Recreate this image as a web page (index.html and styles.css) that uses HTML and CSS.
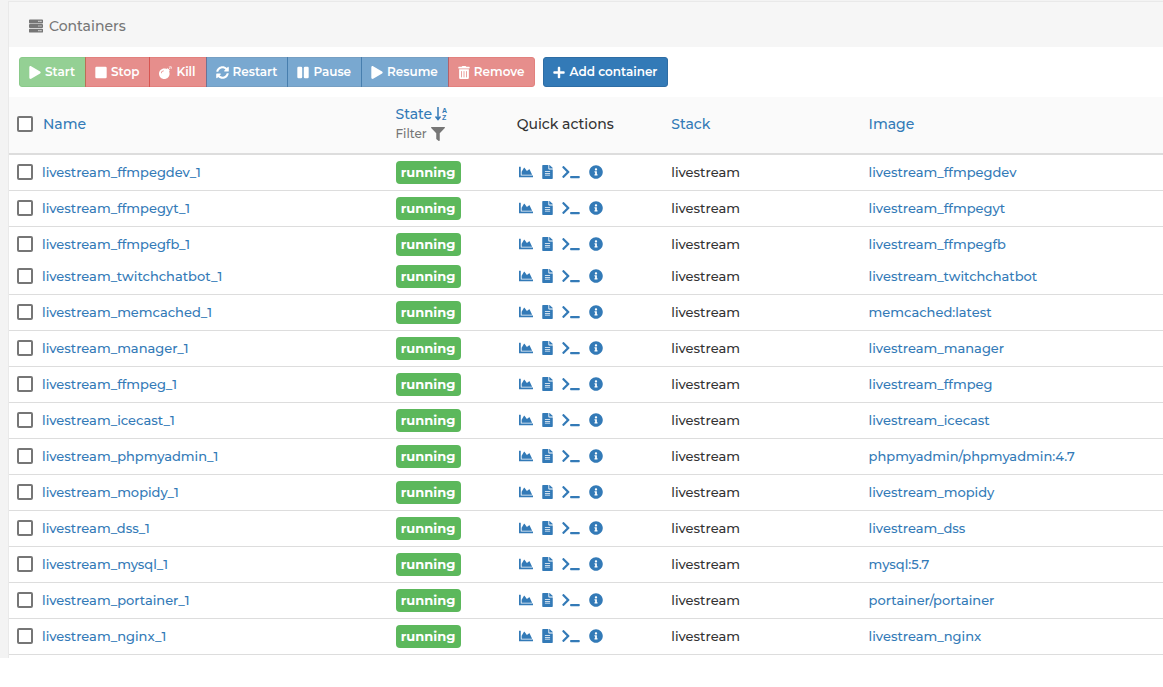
FILE: index.html
```html
<!DOCTYPE html>
<html lang="en">
<head>
<meta charset="utf-8">
<title>Containers</title>
<link rel="stylesheet" href="styles.css">
</head>
<body>
<svg class="sprite" aria-hidden="true">
  <symbol id="server" viewBox="0 0 512 512"><path fill-rule="evenodd" d="M32 16H480Q512 16 512 48V128Q512 160 480 160H32Q0 160 0 128V48Q0 16 32 16ZM344 66V110H384V66ZM416 66V110H456V66ZM32 184H480Q512 184 512 216V296Q512 328 480 328H32Q0 328 0 296V216Q0 184 32 184ZM344 234V278H384V234ZM416 234V278H456V234ZM32 352H480Q512 352 512 384V464Q512 496 480 496H32Q0 496 0 464V384Q0 352 32 352ZM344 402V446H384V402ZM416 402V446H456V402Z"/></symbol>
  <symbol id="play" viewBox="0 0 448 512"><path d="M424.400 214.700L72.400 6.600C43.800-10.300 0 6.100 0 47.900V464c0 37.500 40.700 60.100 72.400 41.300l352-208c31.400-18.500 31.500-64.100 0-82.600z"/></symbol>
  <symbol id="stop" viewBox="0 0 448 512"><rect y="32" width="448" height="448" rx="48"/></symbol>
  <symbol id="bomb" viewBox="0 0 512 512"><path d="M440.500 88.500l-52 52L415 167c9.400 9.400 9.400 24.600 0 33.900l-17.400 17.400c11.800 26.100 18.400 55.100 18.400 85.600 0 114.900-93.100 208-208 208S0 418.900 0 304 93.100 96 208 96c30.500 0 59.500 6.600 85.600 18.400L311 97c9.400-9.400 24.600-9.400 33.900 0l26.500 26.500 52-52 17.100 17zM500 60h-24c-6.600 0-12 5.400-12 12s5.400 12 12 12h24c6.600 0 12-5.400 12-12s-5.400-12-12-12zM440 0c-6.600 0-12 5.400-12 12v24c0 6.600 5.400 12 12 12s12-5.400 12-12V12c0-6.600-5.400-12-12-12zm33.900 55l17-17c4.700-4.700 4.700-12.300 0-17-4.700-4.700-12.300-4.700-17 0l-17 17c-4.700 4.700-4.700 12.300 0 17 4.800 4.700 12.400 4.700 17 0zm-67.800 0c4.700 4.700 12.300 4.700 17 0 4.700-4.700 4.700-12.300 0-17l-17-17c-4.700-4.700-12.300-4.700-17 0-4.700 4.700-4.700 12.300 0 17l17 17zm67.800 34c-4.700-4.700-12.300-4.700-17 0-4.700 4.700-4.700 12.300 0 17l17 17c4.700 4.700 12.300 4.700 17 0 4.700-4.700 4.700-12.300 0-17l-17-17zM112 272c0-35.300 28.700-64 64-64 8.800 0 16-7.200 16-16s-7.200-16-16-16c-52.900 0-96 43.100-96 96 0 8.800 7.200 16 16 16s16-7.200 16-16z"/></symbol>
  <symbol id="sync" viewBox="0 0 512 512"><path d="M370.720 133.280C339.458 104.008 298.888 87.962 255.848 88c-77.458.068-144.328 53.178-162.791 126.850-1.344 5.363-6.122 9.150-11.651 9.150H24.103c-7.498 0-13.194-6.807-11.807-14.176C33.933 94.924 134.813 8 256 8c66.448 0 126.791 26.136 171.315 68.685L463.030 40.970C478.149 25.851 504 36.559 504 57.941V192c0 13.255-10.745 24-24 24H345.941c-21.382 0-32.090-25.851-16.971-40.971l41.750-41.749zM32 296h134.059c21.382 0 32.090 25.851 16.971 40.971l-41.750 41.750c31.262 29.273 71.835 45.319 114.876 45.280 77.418-.070 144.315-53.144 162.787-126.849 1.344-5.363 6.122-9.150 11.651-9.150h57.304c7.498 0 13.194 6.807 11.807 14.176C478.067 417.076 377.187 504 256 504c-66.448 0-126.791-26.136-171.315-68.685L48.970 471.030C33.851 486.149 8 475.441 8 454.059V320c0-13.255 10.745-24 24-24z"/></symbol>
  <symbol id="pause" viewBox="0 0 448 512"><rect y="31" width="192" height="448" rx="48"/><rect x="256" y="31" width="192" height="448" rx="48"/></symbol>
  <symbol id="trash" viewBox="0 0 448 512"><path d="M32 464a48 48 0 0 0 48 48h288a48 48 0 0 0 48-48V128H32zm272-256a16 16 0 0 1 32 0v224a16 16 0 0 1-32 0zm-96 0a16 16 0 0 1 32 0v224a16 16 0 0 1-32 0zm-96 0a16 16 0 0 1 32 0v224a16 16 0 0 1-32 0zM432 32H312l-9.400-18.700A24 24 0 0 0 281.100 0H166.800a23.720 23.720 0 0 0-21.400 13.300L136 32H16A16 16 0 0 0 0 48v32a16 16 0 0 0 16 16h416a16 16 0 0 0 16-16V48a16 16 0 0 0-16-16z"/></symbol>
  <symbol id="plus" viewBox="0 0 448 512"><path d="M416 208H272V64c0-17.670-14.330-32-32-32h-32c-17.670 0-32 14.330-32 32v144H32c-17.670 0-32 14.330-32 32v32c0 17.670 14.330 32 32 32h144v144c0 17.670 14.330 32 32 32h32c17.670 0 32-14.330 32-32V304h144c17.670 0 32-14.330 32-32v-32c0-17.670-14.330-32-32-32z"/></symbol>
  <symbol id="filter" viewBox="0 0 512 512"><path d="M487.976 0H24.028C2.710 0-8.047 25.866 7.058 40.971L192 225.941V432c0 7.831 3.821 15.170 10.237 19.662l80 55.980C298.020 518.690 320 507.493 320 487.980V225.941l184.947-184.970C520.021 25.896 509.338 0 487.976 0z"/></symbol>
  <symbol id="chart" viewBox="0 0 512 512"><path d="M500 384c6.600 0 12 5.400 12 12v40c0 6.600-5.400 12-12 12H12c-6.600 0-12-5.400-12-12V76c0-6.600 5.400-12 12-12h40c6.600 0 12 5.400 12 12v308h436zM372.700 159.500L288 216l-85.300-113.700c-5.100-6.800-15.500-6.300-19.900 1L96 248v104h384l-89.900-187.800c-3.200-6.500-11.400-8.700-17.400-4.700z"/></symbol>
  <symbol id="file" viewBox="0 0 384 512"><path d="M224 136V0H24C10.700 0 0 10.700 0 24v464c0 13.300 10.700 24 24 24h336c13.300 0 24-10.700 24-24V160H248c-13.200 0-24-10.800-24-24zm64 236c0 6.600-5.400 12-12 12H108c-6.600 0-12-5.400-12-12v-8c0-6.600 5.400-12 12-12h168c6.600 0 12 5.400 12 12v8zm0-64c0 6.600-5.400 12-12 12H108c-6.600 0-12-5.400-12-12v-8c0-6.600 5.400-12 12-12h168c6.600 0 12 5.400 12 12v8zm0-72v8c0 6.600-5.400 12-12 12H108c-6.600 0-12-5.400-12-12v-8c0-6.600 5.400-12 12-12h168c6.600 0 12 5.400 12 12zm96-114.100v6.100H256V0h6.100c6.400 0 12.500 2.500 17 7l97.900 98c4.500 4.500 7 10.600 7 16.900z"/></symbol>
  <symbol id="terminal" viewBox="0 0 640 512"><path d="M257.981 272.971L63.638 467.314c-9.373 9.373-24.569 9.373-33.941 0L7.029 444.647c-9.357-9.357-9.375-24.522-.040-33.901L161.011 256 6.990 101.255c-9.335-9.379-9.317-24.544.040-33.901l22.667-22.667c9.373-9.373 24.569-9.373 33.941 0L257.981 239.030c9.373 9.372 9.373 24.568 0 33.941zM640 456v-32c0-13.255-10.745-24-24-24H312c-13.255 0-24 10.745-24 24v32c0 13.255 10.745 24 24 24h304c13.255 0 24-10.745 24-24z"/></symbol>
  <symbol id="info" viewBox="0 0 512 512"><path d="M256 8C119.043 8 8 119.083 8 256c0 136.997 111.043 248 248 248s248-111.003 248-248C504 119.083 392.957 8 256 8zm0 110c23.196 0 42 18.804 42 42s-18.804 42-42 42-42-18.804-42-42 18.804-42 42-42zm56 254c0 6.627-5.373 12-12 12h-88c-6.627 0-12-5.373-12-12v-24c0-6.627 5.373-12 12-12h12v-64h-12c-6.627 0-12-5.373-12-12v-24c0-6.627 5.373-12 12-12h64c6.627 0 12 5.373 12 12v100h12c6.627 0 12 5.373 12 12v24z"/></symbol>
</svg>
<main class="page">
  <section class="widget">
    <header class="widget-header"><svg class="icon wide"><use href="#server"/></svg><span>Containers</span></header>
    <div class="toolbar">
      <div class="group">
        <button class="btn success" disabled><svg class="icon small"><use href="#play"/></svg>Start</button>
        <button class="btn danger" disabled><svg class="icon small"><use href="#stop"/></svg>Stop</button>
        <button class="btn danger" disabled><svg class="icon square"><use href="#bomb"/></svg>Kill</button>
        <button class="btn primary" disabled><svg class="icon square"><use href="#sync"/></svg>Restart</button>
        <button class="btn primary" disabled><svg class="icon small"><use href="#pause"/></svg>Pause</button>
        <button class="btn primary" disabled><svg class="icon small"><use href="#play"/></svg>Resume</button>
        <button class="btn danger" disabled><svg class="icon small"><use href="#trash"/></svg>Remove</button>
      </div>
      <button class="btn primary"><svg class="icon small"><use href="#plus"/></svg>Add container</button>
    </div>
    <table class="grid">
      <colgroup><col class="c-name"><col class="c-state"><col class="c-actions"><col class="c-stack"><col></colgroup>
      <thead>
        <tr>
          <th><div class="name head"><input type="checkbox" aria-label="Select all"><a href="#">Name</a></div></th>
          <th>
            <a class="sort" href="#">State <svg class="sort-icon" viewBox="0 0 13 14" aria-hidden="true"><path d="M3 0V12M0.500 9.500L3 12.500L5.500 9.500"/><text x="7" y="6">A</text><text x="7" y="13">Z</text></svg></a>
            <div class="filter">Filter <svg class="icon wide"><use href="#filter"/></svg></div>
          </th>
          <th>Quick actions</th>
          <th><a href="#">Stack</a></th>
          <th><a href="#">Image</a></th>
        </tr>
      </thead>
      <tbody>
        <tr><td><div class="name"><input type="checkbox" aria-label="Select livestream_ffmpegdev_1"><a href="#">livestream_ffmpegdev_1</a></div></td><td><span class="label">running</span></td><td><div class="actions"><a href="#" aria-label="Stats"><svg class="icon wide"><use href="#chart"/></svg></a><a href="#" aria-label="Logs"><svg class="icon narrow"><use href="#file"/></svg></a><a href="#" aria-label="Console"><svg class="icon extra"><use href="#terminal"/></svg></a><a href="#" aria-label="Inspect"><svg class="icon wide"><use href="#info"/></svg></a></div></td><td>livestream</td><td><a href="#">livestream_ffmpegdev</a></td></tr>
        <tr><td><div class="name"><input type="checkbox" aria-label="Select livestream_ffmpegyt_1"><a href="#">livestream_ffmpegyt_1</a></div></td><td><span class="label">running</span></td><td><div class="actions"><a href="#" aria-label="Stats"><svg class="icon wide"><use href="#chart"/></svg></a><a href="#" aria-label="Logs"><svg class="icon narrow"><use href="#file"/></svg></a><a href="#" aria-label="Console"><svg class="icon extra"><use href="#terminal"/></svg></a><a href="#" aria-label="Inspect"><svg class="icon wide"><use href="#info"/></svg></a></div></td><td>livestream</td><td><a href="#">livestream_ffmpegyt</a></td></tr>
        <tr class="joined"><td><div class="name"><input type="checkbox" aria-label="Select livestream_ffmpegfb_1"><a href="#">livestream_ffmpegfb_1</a></div></td><td><span class="label">running</span></td><td><div class="actions"><a href="#" aria-label="Stats"><svg class="icon wide"><use href="#chart"/></svg></a><a href="#" aria-label="Logs"><svg class="icon narrow"><use href="#file"/></svg></a><a href="#" aria-label="Console"><svg class="icon extra"><use href="#terminal"/></svg></a><a href="#" aria-label="Inspect"><svg class="icon wide"><use href="#info"/></svg></a></div></td><td>livestream</td><td><a href="#">livestream_ffmpegfb</a></td></tr>
        <tr><td><div class="name"><input type="checkbox" aria-label="Select livestream_twitchchatbot_1"><a href="#">livestream_twitchchatbot_1</a></div></td><td><span class="label">running</span></td><td><div class="actions"><a href="#" aria-label="Stats"><svg class="icon wide"><use href="#chart"/></svg></a><a href="#" aria-label="Logs"><svg class="icon narrow"><use href="#file"/></svg></a><a href="#" aria-label="Console"><svg class="icon extra"><use href="#terminal"/></svg></a><a href="#" aria-label="Inspect"><svg class="icon wide"><use href="#info"/></svg></a></div></td><td>livestream</td><td><a href="#">livestream_twitchchatbot</a></td></tr>
        <tr><td><div class="name"><input type="checkbox" aria-label="Select livestream_memcached_1"><a href="#">livestream_memcached_1</a></div></td><td><span class="label">running</span></td><td><div class="actions"><a href="#" aria-label="Stats"><svg class="icon wide"><use href="#chart"/></svg></a><a href="#" aria-label="Logs"><svg class="icon narrow"><use href="#file"/></svg></a><a href="#" aria-label="Console"><svg class="icon extra"><use href="#terminal"/></svg></a><a href="#" aria-label="Inspect"><svg class="icon wide"><use href="#info"/></svg></a></div></td><td>livestream</td><td><a href="#">memcached:latest</a></td></tr>
        <tr><td><div class="name"><input type="checkbox" aria-label="Select livestream_manager_1"><a href="#">livestream_manager_1</a></div></td><td><span class="label">running</span></td><td><div class="actions"><a href="#" aria-label="Stats"><svg class="icon wide"><use href="#chart"/></svg></a><a href="#" aria-label="Logs"><svg class="icon narrow"><use href="#file"/></svg></a><a href="#" aria-label="Console"><svg class="icon extra"><use href="#terminal"/></svg></a><a href="#" aria-label="Inspect"><svg class="icon wide"><use href="#info"/></svg></a></div></td><td>livestream</td><td><a href="#">livestream_manager</a></td></tr>
        <tr><td><div class="name"><input type="checkbox" aria-label="Select livestream_ffmpeg_1"><a href="#">livestream_ffmpeg_1</a></div></td><td><span class="label">running</span></td><td><div class="actions"><a href="#" aria-label="Stats"><svg class="icon wide"><use href="#chart"/></svg></a><a href="#" aria-label="Logs"><svg class="icon narrow"><use href="#file"/></svg></a><a href="#" aria-label="Console"><svg class="icon extra"><use href="#terminal"/></svg></a><a href="#" aria-label="Inspect"><svg class="icon wide"><use href="#info"/></svg></a></div></td><td>livestream</td><td><a href="#">livestream_ffmpeg</a></td></tr>
        <tr><td><div class="name"><input type="checkbox" aria-label="Select livestream_icecast_1"><a href="#">livestream_icecast_1</a></div></td><td><span class="label">running</span></td><td><div class="actions"><a href="#" aria-label="Stats"><svg class="icon wide"><use href="#chart"/></svg></a><a href="#" aria-label="Logs"><svg class="icon narrow"><use href="#file"/></svg></a><a href="#" aria-label="Console"><svg class="icon extra"><use href="#terminal"/></svg></a><a href="#" aria-label="Inspect"><svg class="icon wide"><use href="#info"/></svg></a></div></td><td>livestream</td><td><a href="#">livestream_icecast</a></td></tr>
        <tr><td><div class="name"><input type="checkbox" aria-label="Select livestream_phpmyadmin_1"><a href="#">livestream_phpmyadmin_1</a></div></td><td><span class="label">running</span></td><td><div class="actions"><a href="#" aria-label="Stats"><svg class="icon wide"><use href="#chart"/></svg></a><a href="#" aria-label="Logs"><svg class="icon narrow"><use href="#file"/></svg></a><a href="#" aria-label="Console"><svg class="icon extra"><use href="#terminal"/></svg></a><a href="#" aria-label="Inspect"><svg class="icon wide"><use href="#info"/></svg></a></div></td><td>livestream</td><td><a href="#">phpmyadmin/phpmyadmin:4.7</a></td></tr>
        <tr><td><div class="name"><input type="checkbox" aria-label="Select livestream_mopidy_1"><a href="#">livestream_mopidy_1</a></div></td><td><span class="label">running</span></td><td><div class="actions"><a href="#" aria-label="Stats"><svg class="icon wide"><use href="#chart"/></svg></a><a href="#" aria-label="Logs"><svg class="icon narrow"><use href="#file"/></svg></a><a href="#" aria-label="Console"><svg class="icon extra"><use href="#terminal"/></svg></a><a href="#" aria-label="Inspect"><svg class="icon wide"><use href="#info"/></svg></a></div></td><td>livestream</td><td><a href="#">livestream_mopidy</a></td></tr>
        <tr><td><div class="name"><input type="checkbox" aria-label="Select livestream_dss_1"><a href="#">livestream_dss_1</a></div></td><td><span class="label">running</span></td><td><div class="actions"><a href="#" aria-label="Stats"><svg class="icon wide"><use href="#chart"/></svg></a><a href="#" aria-label="Logs"><svg class="icon narrow"><use href="#file"/></svg></a><a href="#" aria-label="Console"><svg class="icon extra"><use href="#terminal"/></svg></a><a href="#" aria-label="Inspect"><svg class="icon wide"><use href="#info"/></svg></a></div></td><td>livestream</td><td><a href="#">livestream_dss</a></td></tr>
        <tr><td><div class="name"><input type="checkbox" aria-label="Select livestream_mysql_1"><a href="#">livestream_mysql_1</a></div></td><td><span class="label">running</span></td><td><div class="actions"><a href="#" aria-label="Stats"><svg class="icon wide"><use href="#chart"/></svg></a><a href="#" aria-label="Logs"><svg class="icon narrow"><use href="#file"/></svg></a><a href="#" aria-label="Console"><svg class="icon extra"><use href="#terminal"/></svg></a><a href="#" aria-label="Inspect"><svg class="icon wide"><use href="#info"/></svg></a></div></td><td>livestream</td><td><a href="#">mysql:5.7</a></td></tr>
        <tr><td><div class="name"><input type="checkbox" aria-label="Select livestream_portainer_1"><a href="#">livestream_portainer_1</a></div></td><td><span class="label">running</span></td><td><div class="actions"><a href="#" aria-label="Stats"><svg class="icon wide"><use href="#chart"/></svg></a><a href="#" aria-label="Logs"><svg class="icon narrow"><use href="#file"/></svg></a><a href="#" aria-label="Console"><svg class="icon extra"><use href="#terminal"/></svg></a><a href="#" aria-label="Inspect"><svg class="icon wide"><use href="#info"/></svg></a></div></td><td>livestream</td><td><a href="#">portainer/portainer</a></td></tr>
        <tr><td><div class="name"><input type="checkbox" aria-label="Select livestream_nginx_1"><a href="#">livestream_nginx_1</a></div></td><td><span class="label">running</span></td><td><div class="actions"><a href="#" aria-label="Stats"><svg class="icon wide"><use href="#chart"/></svg></a><a href="#" aria-label="Logs"><svg class="icon narrow"><use href="#file"/></svg></a><a href="#" aria-label="Console"><svg class="icon extra"><use href="#terminal"/></svg></a><a href="#" aria-label="Inspect"><svg class="icon wide"><use href="#info"/></svg></a></div></td><td>livestream</td><td><a href="#">livestream_nginx</a></td></tr>
      </tbody>
    </table>
  </section>
</main>
</body>
</html>
```

FILE: styles.css
```css
* { box-sizing: border-box; }

body {
  margin: 0;
  background: #fff;
  color: #333;
  font: 14px/20px Montserrat, Inter, sans-serif;
}

a { color: #337ab7; text-decoration: none; }

.sprite { display: none; }

.icon { height: 14px; fill: currentColor; flex: none; }
.narrow { width: 11px; }
.small { width: 12px; height: 13px; }
.square { width: 13px; height: 13px; }
.wide { width: 14px; }
.extra { width: 18px; }

.page { background: #f3f3f3; padding: 1px 0 0 8px; }

.widget {
  background: #fff;
  border-top: 1px solid #e9e9e9;
  border-left: 1px solid #e9e9e9;
  padding-bottom: 3px;
}

.widget-header {
  display: flex;
  align-items: center;
  gap: 6px;
  padding: 14px 20px 11px;
  background: #f6f6f6;
  color: #767676;
  font-weight: 500;
}

.toolbar { display: flex; gap: 8px; padding: 10px; }
.group { display: flex; }

.btn {
  display: flex;
  align-items: center;
  gap: 4px;
  height: 30px;
  padding: 0 10px 0 9px;
  border: 1px solid;
  border-radius: 3px;
  color: #fff;
  font: 600 12px/18px Montserrat, Inter, sans-serif;
}
.btn:disabled { opacity: 0.65; }
.group .btn { margin-left: -1px; border-radius: 0; }
.group .btn:first-child { margin-left: 0; border-radius: 3px 0 0 3px; }
.group .btn:last-child { border-radius: 0 3px 3px 0; }
.success { background: #5cb85c; border-color: #4cae4c; }
.danger { background: #d9534f; border-color: #d43f3a; }
.primary { background: #337ab7; border-color: #2e6da4; }

.grid { width: 100%; table-layout: fixed; border-collapse: separate; border-spacing: 0; }
.c-name { width: 32.8%; }
.c-state { width: 10.5%; }
.c-actions { width: 13.4%; }
.c-stack { width: 17.1%; }

th {
  height: 58px;
  padding: 0 8px 2px;
  background: #fafafa;
  border-bottom: 2px solid #ddd;
  font-weight: 500;
  text-align: left;
  white-space: nowrap;
}

td {
  height: 36px;
  padding: 6px 8px;
  border-bottom: 1px solid #ddd;
  font-size: 13px;
  font-weight: 500;
  line-height: 22px;
  vertical-align: top;
  white-space: nowrap;
}
.joined td { height: 32px; padding-bottom: 3px; border-bottom: 0; }

.name { display: flex; align-items: center; gap: 9px; }
.head { gap: 10px; }

input[type="checkbox"] {
  appearance: none;
  width: 16px;
  height: 16px;
  margin: 0;
  border: 2px solid #767676;
  border-radius: 2px;
  background: #fff;
}

.sort { display: flex; align-items: center; gap: 3px; }
.sort-icon { width: 13px; height: 14px; overflow: visible; }
.sort-icon path { fill: none; stroke: currentColor; stroke-width: 1.5; }
.sort-icon text { fill: currentColor; font: 700 7px/7px "Liberation Sans", sans-serif; }

.filter { display: flex; align-items: center; gap: 4px; color: #767676; font-size: 12px; font-weight: 500; }

.label {
  display: block;
  width: 65px;
  height: 23px;
  border-radius: 4px;
  background: #5cb85c;
  color: #fff;
  font-weight: 700;
  line-height: 22px;
  text-align: center;
}

.actions { display: flex; align-items: center; gap: 9px; height: 22px; padding-left: 2px; }
.actions a { display: flex; }
```
